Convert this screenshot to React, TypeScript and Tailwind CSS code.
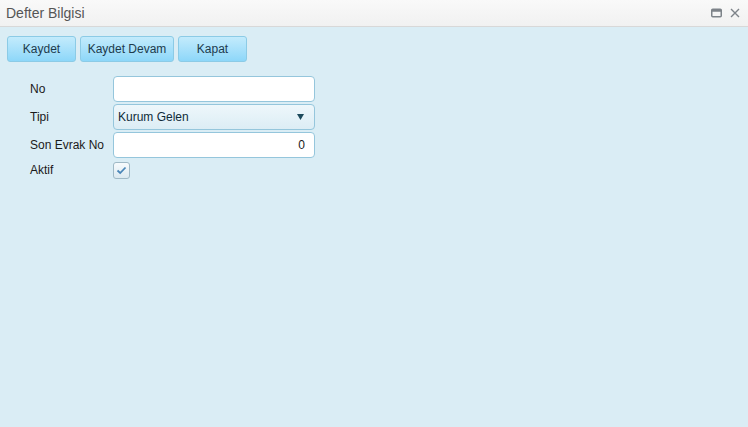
import { useState } from "react";

const font = "font-['Liberation_Sans',Arial,sans-serif]";

function Btn({ label, width }: { label: string; width: string }) {
    return (
        <button
            className={`${width} h-[26px] rounded-[3px] border border-[#8ccbe6] bg-gradient-to-b from-[#c3ebfc] to-[#8dd7f9] text-[12px] text-[#1d3b4d]`}
        >
            {label}
        </button>
    );
}

export default function App() {
    const [aktif, setAktif] = useState(true);

    return (
        <div className={`w-[748px] h-[427px] flex flex-col bg-[#daedf5] ${font}`}>
            {/* title bar */}
            <div className="h-[27px] flex items-center justify-between bg-gradient-to-b from-[#f9f9f9] to-[#f1f1f1] border-b border-[#d8d8d8] pl-[6px] pr-[8px]">
                <span className="text-[14px] text-[#555]">Defter Bilgisi</span>
                <div className="flex items-center gap-[8px]">
                    <svg width="11" height="10" viewBox="0 0 11 10">
                        <rect x="0.75" y="1.25" width="9.5" height="7.5" rx="1" fill="none" stroke="#7d8389" strokeWidth="1.5" />
                        <rect x="0.75" y="1.25" width="9.5" height="2.5" fill="#7d8389" />
                    </svg>
                    <svg width="10" height="10" viewBox="0 0 10 10">
                        <path d="M1 1 L9 9 M9 1 L1 9" stroke="#7d8389" strokeWidth="1.4" />
                    </svg>
                </div>
            </div>

            {/* toolbar */}
            <div className="flex gap-[4px] pl-[7px] pt-[9px]">
                <Btn label="Kaydet" width="w-[69px]" />
                <Btn label="Kaydet Devam" width="w-[94px]" />
                <Btn label="Kapat" width="w-[69px]" />
            </div>

            {/* form */}
            <div className="grid grid-cols-[83px_202px] gap-y-[2px] pl-[30px] pt-[14px] text-[12px] text-[#1a1a1a]">
                <span className="self-center">No</span>
                <input className="h-[26px] rounded-[4px] border border-[#95c6dc] bg-white px-[5px] outline-none" />

                <span className="self-center">Tipi</span>
                <div className="h-[26px] rounded-[4px] border border-[#95c6dc] bg-gradient-to-b from-[#eef7fb] to-[#dcedf5] flex items-center justify-between pl-[4px] pr-[10px] text-[#0f2a3a]">
                    <span>Kurum Gelen</span>
                    <svg width="7" height="6" viewBox="0 0 7 6">
                        <path d="M0 0 H7 L3.5 6 Z" fill="#1d4a5c" />
                    </svg>
                </div>

                <span className="self-center">Son Evrak No</span>
                <input
                    defaultValue="0"
                    className="h-[26px] rounded-[4px] border border-[#95c6dc] bg-white px-[9px] text-right outline-none"
                />

                <span className="self-center">Aktif</span>
                <div className="h-[20px] flex items-center">
                    <button
                        onClick={() => setAktif(!aktif)}
                        className="w-[17px] h-[17px] rounded-[3px] border border-[#9fb9c6] bg-gradient-to-b from-[#f7fbfd] to-[#dbe9f0] flex items-center justify-center"
                    >
                        {aktif && (
                            <svg width="11" height="9" viewBox="0 0 11 9">
                                <path d="M1.5 4.5 L4.2 7 L9.5 1.5" fill="none" stroke="#4a86b8" strokeWidth="1.8" />
                            </svg>
                        )}
                    </button>
                </div>
            </div>
        </div>
    );
}
